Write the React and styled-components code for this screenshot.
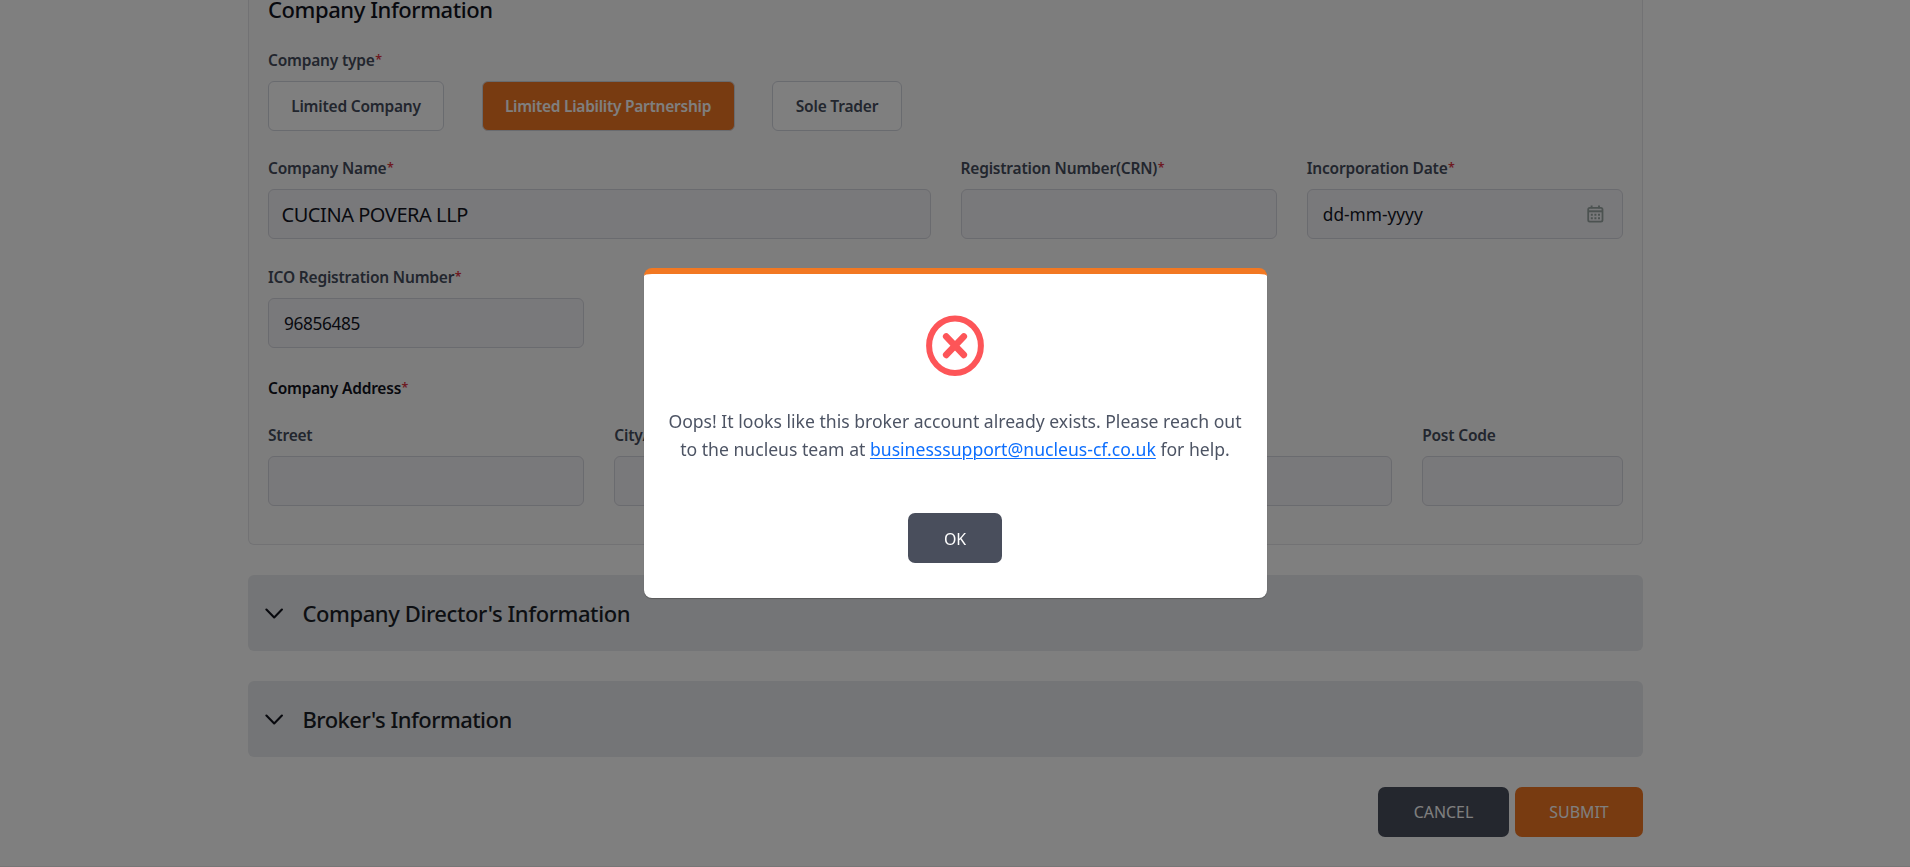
import React from 'react';
import styled, { createGlobalStyle } from 'styled-components';

const GlobalStyle = createGlobalStyle`
  *, *::before, *::after { box-sizing: border-box; }
  html, body { margin: 0; padding: 0; overflow: hidden; background: #fff; }
  body { font-family: "Segoe UI", "Noto Sans", "Open Sans", sans-serif; color: #12151f; }
  button, input { font-family: inherit; }
`;

const Page = styled.div`
  height: 867px;
  overflow: hidden;
  border-bottom: 1px solid #ececec;
`;

const Content = styled.main`
  width: 1395px;
  margin-left: 248px;
`;

const Card = styled.section`
  height: 545px;
  padding: 0 19px;
  border: 1px solid #e4e5e9;
  border-top: 0;
  border-radius: 0 0 6px 6px;
  background: #fbfbfb;
`;

const CardTitle = styled.h2`
  margin: 0 0 31px;
  font-size: 22px;
  line-height: 19px;
  font-weight: 500;
  letter-spacing: -0.43px;
  color: #11131d;
`;

const FieldGrid = styled.div`
  display: grid;
  grid-template-columns: repeat(12, 1fr);
  column-gap: 30px;
  margin-top: ${(p) => p.$top || 0}px;
`;

const Field = styled.div`
  display: flex;
  flex-direction: column;
  gap: 11px;
  min-width: 0;
  grid-column: span ${(p) => p.$span || 3};
`;

const Label = styled.label`
  display: block;
  height: 20px;
  font-size: 15.5px;
  line-height: 20px;
  font-weight: 600;
  letter-spacing: -0.2px;
  white-space: nowrap;
  color: #454c5c;
`;

const Star = styled.span`
  margin-left: 0.5px;
  font-size: 12.5px;
  font-weight: 600;
  line-height: 0;
  vertical-align: 2px;
  color: #dc3545;
`;

const AddressTitle = styled(Label)`
  margin: 30px 0 0;
  color: #11131d;
`;

const Choices = styled.div`
  display: flex;
  gap: 37.5px;
`;

const Choice = styled.button`
  width: ${(p) => p.$width}px;
  height: 50px;
  padding: 0;
  border: 1px solid #d3d6df;
  border-radius: 6px;
  background: ${(p) => (p.$active ? '#f07623' : '#fff')};
  color: ${(p) => (p.$active ? '#fff' : '#454c5c')};
  font-size: 15.5px;
  font-weight: 600;
  letter-spacing: ${(p) => (p.$active ? -0.26 : -0.2)}px;
  white-space: nowrap;
`;

const Control = styled.div`
  display: flex;
  align-items: center;
  justify-content: space-between;
  height: 50px;
  padding: 0 18px 0 ${(p) => (p.$large ? 12.5 : 15)}px;
  border: 1px solid #d5d6de;
  border-radius: 6px;
  background: #f3f3f7;
  color: #12151f;
  font-size: ${(p) => (p.$large ? 20 : 17.3)}px;
  letter-spacing: ${(p) => p.$tracking || 0}px;
`;

const Accordion = styled.section`
  display: flex;
  align-items: center;
  gap: 18.5px;
  height: 76px;
  margin-top: 30px;
  padding-left: 17px;
  border-radius: 6px;
  background: #e9ebee;
`;

const AccordionTitle = styled.h2`
  margin: 0;
  font-size: 22px;
  line-height: 30px;
  font-weight: 500;
  letter-spacing: ${(p) => p.$tracking}px;
  color: #1b1e27;
`;

const Actions = styled.div`
  display: flex;
  justify-content: flex-end;
  gap: 6px;
  margin-top: 30px;
`;

const Button = styled.button`
  width: ${(p) => p.$width}px;
  height: 50px;
  padding: ${(p) => (p.$drop ? '1px 0 0' : '0 0 1px')};
  border: 0;
  border-radius: 7px;
  background: ${(p) => (p.$primary ? '#f07623' : '#494e5c')};
  color: #fff;
  font-size: 15.9px;
`;

const Backdrop = styled.div`
  position: fixed;
  inset: 0;
  display: flex;
  align-items: flex-start;
  justify-content: center;
  padding: 268px 0 0 1px;
  background: rgba(0, 0, 0, 0.5);
`;

const Dialog = styled.div`
  display: flex;
  flex-direction: column;
  align-items: center;
  width: 623px;
  height: 330px;
  padding: 41px 1px 0 0;
  border-top: 6px solid #f27822;
  border-radius: 8px;
  background: #fff;
  box-shadow: 0 1px 1px rgba(0, 0, 0, 0.25);
`;

const Message = styled.p`
  margin: 31px 0 50px;
  font-size: 17.6px;
  line-height: 28px;
  text-align: center;
  color: #4d5464;
`;

const MailLink = styled.a`
  color: #0d6efd;
  text-decoration: underline;
  text-underline-offset: 2px;
  text-decoration-thickness: 1px;
`;

const Required = () => <Star>*</Star>;

const Chevron = () => (
  <svg width="19" height="12" viewBox="0 0 19 12" fill="none" stroke="#11131d" strokeWidth="2.1" strokeLinecap="round" strokeLinejoin="round">
    <path d="M1.4 2.6 9.2 10.5 16.9 2.6" />
  </svg>
);

const CalendarIcon = () => (
  <svg width="17" height="18" viewBox="0 0 17 18" fill="none" stroke="#98a5a2">
    <rect x="1.2" y="2.9" width="14.3" height="13.8" rx="1.6" strokeWidth="1.8" />
    <path d="M4.6 .4v2.8M12 .4v2.8" strokeWidth="1.9" />
    <path d="M1.2 6.3h14.3" strokeWidth="2" />
    <path d="M3.8 9.8h2M7.4 9.8h2M11 9.8h2M3.8 13.2h2M7.4 13.2h2M11 13.2h2" strokeWidth="1.9" />
  </svg>
);

const ErrorIcon = () => (
  <svg width="58" height="61" viewBox="0 0 58 61" fill="none" stroke="#fd5558">
    <ellipse cx="29" cy="30.7" rx="25.9" ry="27.3" strokeWidth="6" />
    <path d="M20.2 21.5 37.8 39.9M37.8 21.5 20.2 39.9" strokeWidth="6.6" strokeLinecap="round" />
  </svg>
);

export default function App() {
  return (
    <>
      <GlobalStyle />
      <Page>
        <Content>
          <Card>
            <CardTitle>Company Information</CardTitle>
            <Field>
              <Label>Company type<Required /></Label>
              <Choices>
                <Choice $width={176}>Limited Company</Choice>
                <Choice $width={253} $active>Limited Liability Partnership</Choice>
                <Choice $width={130}>Sole Trader</Choice>
              </Choices>
            </Field>
            <FieldGrid $top={27}>
              <Field $span={6}>
                <Label>Company Name<Required /></Label>
                <Control $large $tracking={-0.45}>CUCINA POVERA LLP</Control>
              </Field>
              <Field>
                <Label>Registration Number(CRN)<Required /></Label>
                <Control />
              </Field>
              <Field>
                <Label>Incorporation Date<Required /></Label>
                <Control>dd-mm-yyyy<CalendarIcon /></Control>
              </Field>
            </FieldGrid>
            <FieldGrid $top={28}>
              <Field>
                <Label>ICO Registration Number<Required /></Label>
                <Control $tracking={-0.4}>96856485</Control>
              </Field>
            </FieldGrid>
            <AddressTitle as="h3">Company Address<Required /></AddressTitle>
            <FieldGrid $top={27}>
              <Field>
                <Label>Street</Label>
                <Control />
              </Field>
              <Field>
                <Label>City/Town</Label>
                <Control />
              </Field>
              <Field $span={4}>
                <Label>County</Label>
                <Control />
              </Field>
              <Field $span={2}>
                <Label>Post Code</Label>
                <Control />
              </Field>
            </FieldGrid>
          </Card>
          <Accordion>
            <Chevron />
            <AccordionTitle $tracking={-0.42}>Company Director's Information</AccordionTitle>
          </Accordion>
          <Accordion>
            <Chevron />
            <AccordionTitle $tracking={-0.54}>Broker's Information</AccordionTitle>
          </Accordion>
          <Actions>
            <Button $width={131}>CANCEL</Button>
            <Button $width={128} $primary>SUBMIT</Button>
          </Actions>
        </Content>
      </Page>
      <Backdrop>
        <Dialog role="dialog">
          <ErrorIcon />
          <Message>
            Oops! It looks like this broker account already exists. Please reach out
            <br />
            to the nucleus team at <MailLink>businesssupport@nucleus-cf.co.uk</MailLink> for help.
          </Message>
          <Button $width={94} $drop>OK</Button>
        </Dialog>
      </Backdrop>
    </>
  );
}
